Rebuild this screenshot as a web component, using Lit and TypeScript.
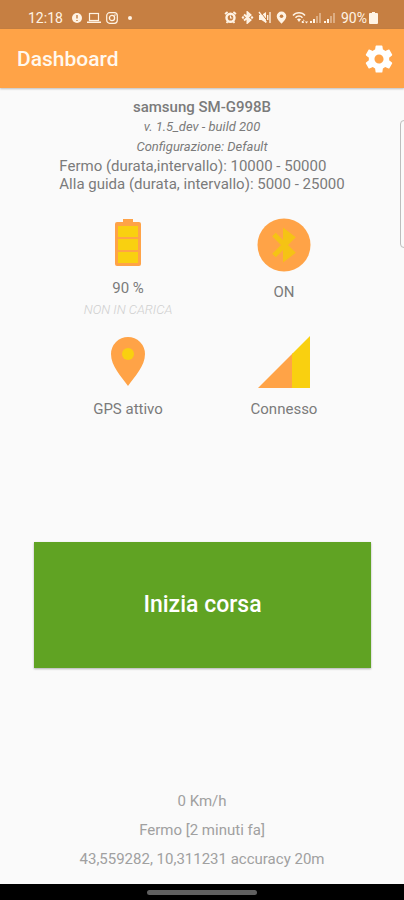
import { LitElement, html, css, svg } from "lit";
import { customElement, state } from "lit/decorators.js";

@customElement("status-bar")
export class StatusBar extends LitElement {
  static styles = css`
    :host {
      display: flex;
      justify-content: space-between;
      align-items: center;
      height: 29px;
      box-sizing: border-box;
      padding: 6px 26px 0 28px;
      background: #c67f42;
      color: #fff3e4;
      font-size: 14px;
      line-height: 20px;
    }
    .group {
      display: flex;
      align-items: center;
      gap: 5px;
    }
    .group.right {
      gap: 4px;
    }
    .time {
      margin-right: 4px;
    }
    .dot {
      width: 4px;
      height: 4px;
      margin-left: 5px;
      border-radius: 50%;
      background: currentColor;
    }
    .power {
      display: flex;
      align-items: center;
      gap: 2px;
    }
    .signals {
      display: flex;
      align-items: center;
    }
    svg {
      display: block;
      fill: currentColor;
    }
    .line {
      fill: none;
      stroke: currentColor;
    }
    .cut {
      fill: none;
      stroke: #c67f42;
    }
    .hole {
      fill: #c67f42;
    }
    .faint {
      opacity: 0.4;
    }
  `;

  private cell() {
    return svg`<path d="M1 12V10H3V12ZM4 12V8H6V12Z"/><path class="faint" d="M7 12V5H9V12ZM10 12V2H12V12Z"/>`;
  }

  render() {
    return html`
      <div class="group">
        <span class="time">12:18</span>
        <svg width="10" height="12" viewBox="0 0 10 12">
          <circle cx="5" cy="6" r="5" />
          <path class="cut" d="M5 3V6.5M5 8V9" stroke-width="1.4" />
        </svg>
        <svg width="14" height="12" viewBox="0 0 14 12">
          <rect class="line" x="2.5" y="1.5" width="9" height="7" stroke-width="1.2" />
          <path d="M0 9.5H14V11H0Z" />
        </svg>
        <svg width="12" height="12" viewBox="0 0 12 12">
          <rect class="line" x="0.7" y="0.7" width="10.6" height="10.6" rx="3" stroke-width="1.2" />
          <circle class="line" cx="6" cy="6" r="2.6" stroke-width="1.3" />
          <circle cx="9" cy="3" r="0.8" />
        </svg>
        <span class="dot"></span>
      </div>
      <div class="group right">
        <svg width="13" height="13" viewBox="0 0 13 13">
          <path class="line" d="M1 3L3.6 1M12 3L9.4 1M2.6 12L3.6 10.6M10.4 12L9.4 10.6" stroke-width="1.8" />
          <circle class="line" cx="6.5" cy="6.8" r="4" stroke-width="2.4" />
          <path class="line" d="M6.5 4.5V7H8.3" stroke-width="1.1" />
        </svg>
        <svg width="13" height="13" viewBox="0 0 13 13">
          <path class="line" d="M3 3.6L9.4 9L6.5 11.6V1.4L9.4 4L3 9.4" stroke-width="2" />
          <circle cx="2" cy="6.5" r="1.2" />
          <circle cx="11" cy="6.5" r="1.2" />
        </svg>
        <svg width="13" height="13" viewBox="0 0 13 13">
          <path d="M1 4H3.5L8 1V12L3.5 9H1Z" />
          <path class="cut" d="M2.2 0.6L9 9.4" stroke-width="1" />
          <path class="line" d="M1 1L8.4 11.4" stroke-width="1.3" />
          <path class="line" d="M9.7 4V9M12 1V12" stroke-width="1.3" />
        </svg>
        <svg width="13" height="13" viewBox="0 0 13 13">
          <path d="M6.5 0.5A4.8 4.8 0 0 1 11.3 5.3C11.3 8 8.5 10.5 6.5 12.8C4.5 10.5 1.7 8 1.7 5.3A4.8 4.8 0 0 1 6.5 0.5Z" />
          <circle class="hole" cx="6.5" cy="5.2" r="1.8" />
        </svg>
        <div class="signals">
          <svg width="17" height="13" viewBox="0 0 17 13">
            <path class="line" d="M1 4.500C4 0.800 10 0.800 13 4.500M3.500 6.800C5.500 4.500 8.500 4.500 10.500 6.800" stroke-width="1.500" />
            <path d="M5 8.200Q7 7 9 8.200L7 11Z" />
            <path d="M11 8L12.800 10H9.800V12H12ZM14.500 12.500L12.800 10.500H16.200Z" />
          </svg>
          <svg width="14" height="13" viewBox="0 0 14 13">${this.cell()}</svg>
          <svg width="14" height="13" viewBox="0 0 14 13">${this.cell()}</svg>
        </div>
        <span class="power">
          <span>90%</span>
          <svg width="9" height="12" viewBox="0 0 9 12">
            <path d="M3 0H6V1H8Q9 1 9 2V11Q9 12 8 12H1Q0 12 0 11V2Q0 1 1 1H3Z" />
          </svg>
        </span>
      </div>
    `;
  }
}

@customElement("app-root")
export class AppRoot extends LitElement {
  static styles = css`
    :host {
      display: flex;
      flex-direction: column;
      min-height: 100vh;
      overflow: hidden;
      background: #fafafa;
      color: #7b7b7b;
      font-family: Roboto, "Liberation Sans", sans-serif;
      font-size: 15px;
      line-height: 18px;
    }
    header {
      display: flex;
      align-items: center;
      justify-content: space-between;
      height: 59px;
      padding: 0 8px 0 17px;
      background: #ffa347;
      color: #fff8ee;
      box-shadow: 0 1px 2px rgba(0, 0, 0, 0.25);
    }
    h1 {
      margin: 0;
      font-size: 21px;
      font-weight: 500;
      line-height: 24px;
    }
    button {
      border: 0;
      font-family: inherit;
      cursor: pointer;
    }
    .settings {
      padding: 0;
      background: none;
      color: #fff;
    }
    svg {
      display: block;
    }
    main {
      position: relative;
      flex: 1;
      display: flex;
      flex-direction: column;
      padding-top: 9px;
    }
    .drawer {
      position: absolute;
      top: 32px;
      right: -4px;
      width: 8px;
      height: 128px;
      box-sizing: border-box;
      border: 1px solid #bdbdbd;
      border-radius: 4px;
    }
    .device {
      text-align: center;
    }
    p,
    h2 {
      margin: 0;
    }
    h2 {
      font-size: 15px;
      font-weight: 500;
      line-height: 20px;
    }
    .build {
      font-size: 13px;
      font-style: italic;
      line-height: 20px;
    }
    .timing {
      width: max-content;
      margin: 0 auto;
      text-align: left;
    }
    .sensors {
      display: grid;
      grid-template-columns: 1fr 1fr;
      row-gap: 16px;
      padding: 25px 42px 4px 50px;
      text-align: center;
    }
    .sensor {
      display: flex;
      flex-direction: column;
      align-items: center;
    }
    .caption {
      margin-top: 11px;
    }
    .charge {
      margin-top: 4px;
      color: #cfcfcf;
      font-size: 13px;
      font-style: italic;
      font-weight: 300;
    }
    .orange {
      fill: #ffa347;
    }
    .yellow {
      fill: #f9d010;
    }
    .rune {
      fill: none;
      stroke: #f5c314;
      stroke-width: 5;
    }
    .start {
      height: 126px;
      margin: auto 33px auto 34px;
      background: #60a323;
      color: #fff;
      font-size: 23px;
      font-weight: 500;
      line-height: 28px;
      box-shadow: 0 1px 2px rgba(0, 0, 0, 0.3);
    }
    .position {
      padding-bottom: 10px;
      color: #a0a0a0;
      line-height: 29px;
      text-align: center;
    }
    footer {
      display: flex;
      align-items: center;
      justify-content: center;
      height: 16px;
      background: #000;
    }
    .handle {
      width: 27%;
      height: 5px;
      border-radius: 3px;
      background: #606060;
    }
  `;

  @state() private running = false;

  render() {
    return html`
      <status-bar></status-bar>
      <header>
        <h1>Dashboard</h1>
        <button class="settings" aria-label="Impostazioni">
          <svg width="34" height="34" viewBox="0 0 24 24" fill="currentColor">
            <path
              d="M19.14 12.94c.04-.3.06-.61.06-.94 0-.32-.02-.64-.07-.94l2.03-1.58c.18-.14.23-.41.12-.61l-1.92-3.32c-.12-.22-.37-.29-.59-.22l-2.39.96c-.5-.38-1.03-.7-1.62-.94l-.36-2.54c-.04-.24-.24-.41-.48-.41h-3.84c-.24 0-.43.17-.47.41l-.36 2.54c-.59.24-1.13.57-1.62.94l-2.39-.96c-.22-.08-.47 0-.59.22L2.74 8.87c-.12.21-.08.47.12.61l2.03 1.58c-.05.3-.09.63-.09.94s.02.64.07.94l-2.03 1.58c-.18.14-.23.41-.12.61l1.92 3.32c.12.22.37.29.59.22l2.39-.96c.5.38 1.03.7 1.62.94l.36 2.54c.05.24.24.41.48.41h3.84c.24 0 .44-.17.47-.41l.36-2.54c.59-.24 1.13-.56 1.62-.94l2.39.96c.22.08.47 0 .59-.22l1.92-3.32c.12-.22.07-.47-.12-.61l-2.01-1.58zM12 15.2c-1.76 0-3.2-1.44-3.2-3.2s1.44-3.2 3.2-3.2 3.2 1.44 3.2 3.2-1.44 3.2-3.2 3.2z"
            />
          </svg>
        </button>
      </header>
      <main>
        <section class="device">
          <h2>samsung SM-G998B</h2>
          <p class="build">v. 1.5_dev - build 200</p>
          <p class="build">Configurazione: Default</p>
          <div class="timing">
            <p>Fermo (durata,intervallo): 10000 - 50000</p>
            <p>Alla guida (durata, intervallo): 5000 - 25000</p>
          </div>
        </section>
        <span class="drawer"></span>
        <section class="sensors">
          <div class="sensor">
            <svg width="54" height="50" viewBox="0 0 54 50">
              <path class="orange" d="M22 1H32V4H38Q40 4 40 6V46Q40 48 38 48H16Q14 48 14 46V6Q14 4 16 4H22Z" />
              <path class="yellow" d="M17 8H37V19H17ZM17 21H37V32H17ZM17 34H37V45H17Z" />
            </svg>
            <p class="caption">90 %</p>
            <p class="charge">NON IN CARICA</p>
          </div>
          <div class="sensor">
            <svg width="54" height="54" viewBox="0 0 54 54">
              <circle class="orange" cx="27" cy="27" r="26.5" />
              <path class="rune" d="M17 16.500L35 34.500L28.500 39.500V14.500L35 19.500L17 37.500" />
            </svg>
            <p class="caption">ON</p>
          </div>
          <div class="sensor">
            <svg width="54" height="54" viewBox="0 0 54 54">
              <path class="orange" d="M27 2A17 17 0 0 1 44 19C44 31 34 41 27 51C20 41 10 31 10 19A17 17 0 0 1 27 2Z" />
              <circle class="yellow" cx="27" cy="19" r="6" />
            </svg>
            <p class="caption">GPS attivo</p>
          </div>
          <div class="sensor">
            <svg width="54" height="54" viewBox="0 0 54 54">
              <path class="orange" d="M1 53L36 18V53Z" />
              <path class="yellow" d="M35 19L53 1V53H35Z" />
            </svg>
            <p class="caption">Connesso</p>
          </div>
        </section>
        <button class="start" aria-pressed=${this.running} @click=${() => (this.running = !this.running)}>
          Inizia corsa
        </button>
        <section class="position">
          <p>0 Km/h</p>
          <p>Fermo [2 minuti fa]</p>
          <p>43,559282, 10,311231 accuracy 20m</p>
        </section>
      </main>
      <footer><span class="handle"></span></footer>
    `;
  }
}
